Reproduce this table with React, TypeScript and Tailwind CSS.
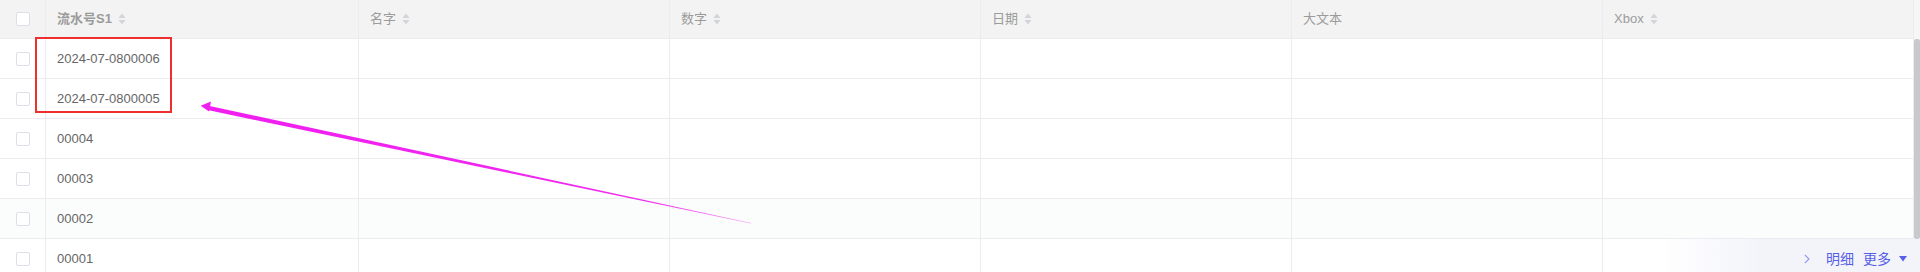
import React from "react";

type Col = { title: string; width: string; sortable: boolean; bold?: boolean };

const columns: Col[] = [
  { title: "流水号S1", width: "w-[313px]", sortable: true, bold: true },
  { title: "名字", width: "w-[311px]", sortable: true },
  { title: "数字", width: "w-[311px]", sortable: true },
  { title: "日期", width: "w-[311px]", sortable: true },
  { title: "大文本", width: "w-[311px]", sortable: false },
  { title: "Xbox", width: "w-[311px]", sortable: true },
];

const rows = [
  "2024-07-0800006",
  "2024-07-0800005",
  "00004",
  "00003",
  "00002",
  "00001",
];

const SortIcon = () => (
  <svg width="8" height="12" viewBox="0 0 8 12" className="ml-[6px] shrink-0">
    <path d="M4 0.5 L7.5 5 L0.5 5 Z" fill="#d2d4da" />
    <path d="M4 11.5 L7.5 7 L0.5 7 Z" fill="#d2d4da" />
  </svg>
);

const Checkbox = () => (
  <span className="block w-[14px] h-[14px] rounded-[2px] border border-[#dcdfe6] bg-white" />
);

const Arrow = () => (
  <svg
    className="absolute left-0 top-0 pointer-events-none"
    width="800"
    height="272"
    viewBox="0 0 800 272"
  >
    <defs>
      <linearGradient id="tail" x1="210" y1="108" x2="751" y2="223" gradientUnits="userSpaceOnUse">
        <stop offset="0" stopColor="#f01ef0" />
        <stop offset="0.8" stopColor="#f02af0" />
        <stop offset="1" stopColor="#f59af5" />
      </linearGradient>
    </defs>
    <polygon points="209.6,106 751,222.9 750.8,223.6 208.8,110.3" fill="url(#tail)" />
    <polygon points="200.7,105.7 211,101.4 209,111.4" fill="#f01ef0" />
  </svg>
);

const App = () => {
  return (
    <div
      className="relative w-[1920px] h-[272px] overflow-hidden bg-white text-[13px]"
      style={{ fontFamily: '"Liberation Sans", "Noto Sans CJK SC", sans-serif' }}
    >
      <div className="flex">
        <div className="w-[1914px] shrink-0">
          <div className="flex h-[39px] bg-[#f3f3f3] border-b border-[#ebebf0]">
            <div className="w-[46px] shrink-0 flex items-center justify-center border-r border-[#ebebf0]">
              <Checkbox />
            </div>
            {columns.map((c) => (
              <div
                key={c.title}
                className={`${c.width} shrink-0 flex items-center pl-[11px] border-r border-[#ebebf0] text-[#9b9b9b] ${
                  c.bold ? "font-bold" : ""
                }`}
              >
                <span>{c.title}</span>
                {c.sortable && <SortIcon />}
              </div>
            ))}
          </div>
          {rows.map((r, i) => (
            <div
              key={r}
              className={`flex h-[40px] border-b border-[#ebebf0] ${i === 4 ? "bg-[#fbfdfd]" : "bg-white"}`}
            >
              <div className="w-[46px] shrink-0 flex items-center justify-center border-r border-[#ebebf0]">
                <Checkbox />
              </div>
              {columns.map((c, j) => (
                <div
                  key={c.title}
                  className={`${c.width} shrink-0 flex items-center pl-[11px] border-r border-[#ebebf0] text-[#666666]`}
                >
                  {j === 0 ? r : ""}
                </div>
              ))}
            </div>
          ))}
        </div>
        <div className="w-[6px] shrink-0 flex flex-col">
          <div className="h-[39px] bg-[#f6f6f6]" />
          <div className="h-[200px] bg-[#c9c9cd] rounded-[2px]" />
        </div>
      </div>

      <div className="absolute left-[35px] top-[37px] w-[137px] h-[76px] border-2 border-[#ef2f2f]" />

      <Arrow />

      <div className="absolute right-0 top-[239px] w-[260px] h-[33px] bg-gradient-to-r from-transparent via-[#f3f4fa] via-40% to-[#f3f4fa] flex items-start justify-end pt-[11px] pr-[13px] text-[#5560e6]">
        <span className="text-[14px] leading-[18px] mr-[16px]">
          <svg width="6" height="10" viewBox="0 0 6 10" className="mt-[4px]">
            <path d="M0.8 0.8 L5 5 L0.8 9.2" fill="none" stroke="#8a96ee" strokeWidth="1.1" />
          </svg>
        </span>
        <span className="text-[14px] leading-[18px]">明细</span>
        <span className="text-[14px] leading-[18px] ml-[9px]">更多</span>
        <svg width="8" height="6" viewBox="0 0 8 6" className="ml-[8px] mt-[6px]">
          <path d="M0 0 L8 0 L4 5.5 Z" fill="#5560e6" />
        </svg>
      </div>
    </div>
  );
};

export default App;
